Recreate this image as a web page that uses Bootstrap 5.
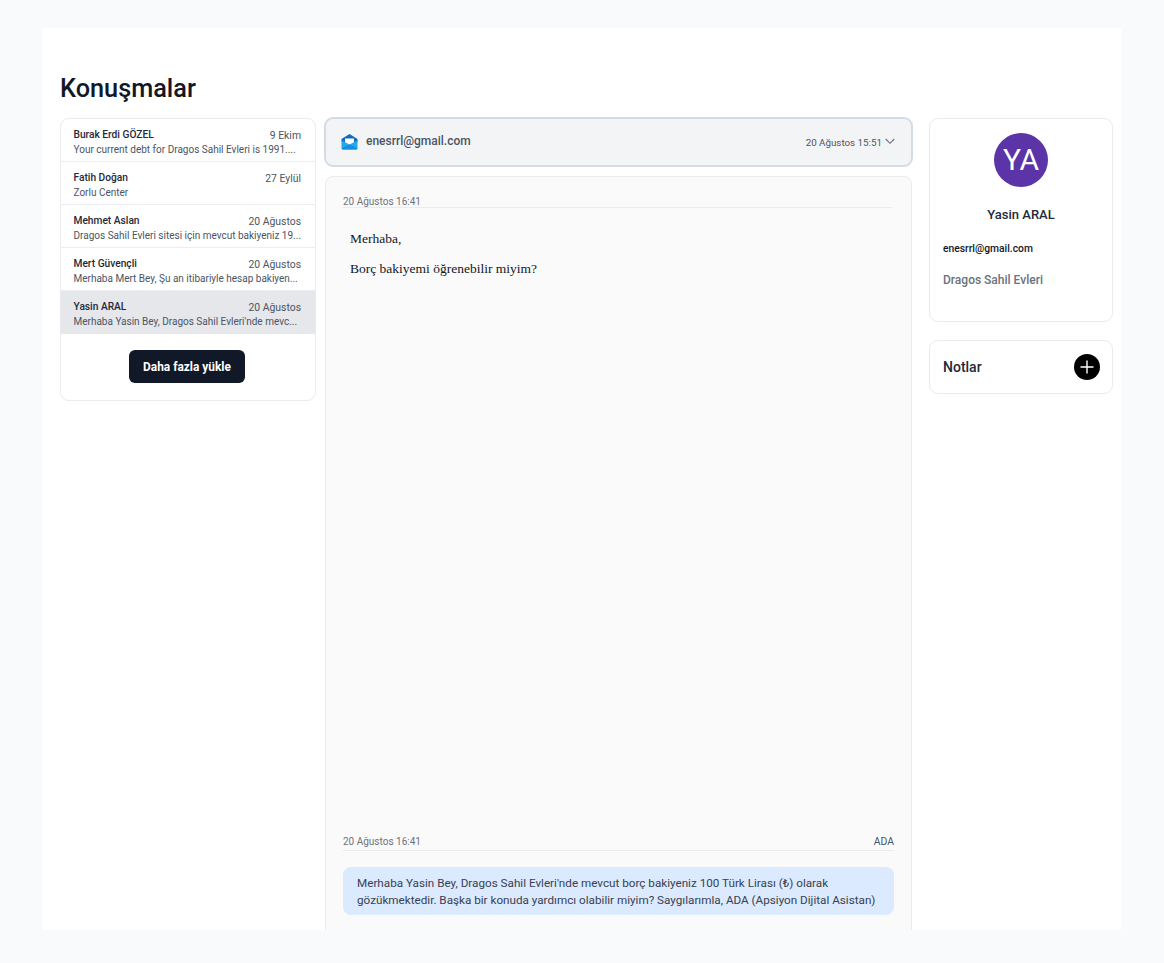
<!doctype html>
<html lang="tr">
<head>
<meta charset="utf-8">
<title>Konuşmalar</title>
<link href="https://cdn.jsdelivr.net/npm/bootstrap@5.3.0/dist/css/bootstrap.min.css" rel="stylesheet">
<style>
html,body{height:100%;overflow:hidden}
body{background:#f9fafb;font-family:Roboto,"Noto Sans",sans-serif;color:#111827;padding:28px 43px 33px 42px}
.sheet{background:#fff;height:902px;overflow:hidden;padding:43px 8px 0 18px}
.page-title{font-size:25.3px;font-weight:500;line-height:36px;margin:0 0 11px;color:#111827}
.cols{gap:9px;align-items:flex-start}
.col-left{width:256px;flex:none}
.col-mid{width:587px;flex:none}
.col-right{width:184px;flex:none;margin-left:8px}
.panel{background:#fff;border:1px solid #e9ebef;border-radius:9px}
.conv-list{border-radius:9px 9px 0 0;overflow:hidden}
.conv{padding:9px 14px 6px 12.5px;height:43px;border-bottom:1px solid #eceef1;font-size:10px;line-height:13px;color:#4b5563}
.conv:nth-child(5){background:#e5e7eb;border-bottom:0}
.conv-name{font-weight:500;font-size:10.2px;color:#1f2937}
.conv-date{font-size:10.4px;color:#4b5563;padding-top:1px}
.conv-text{white-space:nowrap;line-height:15px}
.more-btn{background:#111827;color:#fff;font-size:11.9px;font-weight:700;border-radius:6px;padding:2px 0 0;width:116px;height:33px;border:0;margin-left:-2px}
.more-btn:hover{background:#111827;color:#fff}
.more-wrap{padding:16px 0 17px}
.mail-head{background:#f3f4f6;border:2px solid #d3dce6;border-radius:9px;height:50px;padding:0 16px 0 15px;margin:-1px 0 9px -1px;width:589px}
.mail-addr{font-size:12px;color:#4b5563;font-weight:500;margin-left:8px;margin-top:-2px}
.mail-date{font-size:9.8px;color:#4b5563;margin-top:3px}
.thread{background:#fafafa;border:1px solid #e9ebef;border-radius:8px 8px 0 0;height:760px;padding:0 17px;display:flex;flex-direction:column}
.msg-meta{font-size:10px;color:#6b7280;border-bottom:1px solid #e9ebef}
.meta-top{margin:18px 2px 0 0;padding-top:1px;line-height:11px}
.meta-bottom{padding:1px 0 2px;line-height:12px}
.meta-bottom b{font-weight:400;font-size:10.4px;color:#4b5563}
.msg-body{font-family:"Liberation Serif",serif;font-size:13.5px;line-height:16px;color:#111827;padding:0 7px;margin-top:23px}
.msg-body p{margin:0 0 14px}
.bubble{background:#dbeafe;border-radius:8px;font-size:11.7px;line-height:17px;color:#374151;padding:8px 14px 0;margin-top:16px;height:48px;white-space:nowrap;flex:none}
.thread-end{height:20px;flex:none}
.avatar{width:54px;height:54px;border-radius:50%;background:#5b34a8;color:#fff;font-size:30px;line-height:54px;text-align:center;margin:0 auto}
.card-main{height:204px;padding:14px 13px 0}
.person{font-size:13px;font-weight:500;text-align:center;margin-top:19px;line-height:18px;color:#1f2937}
.person-mail{font-size:10.3px;font-weight:500;margin-top:18px;line-height:14px;color:#111827}
.person-site{font-size:12px;font-weight:500;margin-top:16px;line-height:16px;color:#6b7280}
.card-notes{height:54px;margin-top:18px;padding:0 12px 0 13px}
.notes-title{font-size:14px;font-weight:500;color:#1f2937}
.plus{width:26px;height:26px;display:block}
.chev{margin-left:3px}
</style>
</head>
<body>
<main class="sheet">
  <h1 class="page-title">Konuşmalar</h1>
  <div class="d-flex cols">
    <section class="col-left panel">
      <div class="conv-list">
        <div class="conv"><div class="d-flex justify-content-between"><span class="conv-name">Burak Erdi GÖZEL</span><span class="conv-date">9 Ekim</span></div><div class="conv-text">Your current debt for Dragos Sahil Evleri is 1991....</div></div>
        <div class="conv"><div class="d-flex justify-content-between"><span class="conv-name">Fatih Doğan</span><span class="conv-date">27 Eylül</span></div><div class="conv-text">Zorlu Center</div></div>
        <div class="conv"><div class="d-flex justify-content-between"><span class="conv-name">Mehmet Aslan</span><span class="conv-date">20 Ağustos</span></div><div class="conv-text">Dragos Sahil Evleri sitesi için mevcut bakiyeniz 19...</div></div>
        <div class="conv"><div class="d-flex justify-content-between"><span class="conv-name">Mert Güvençli</span><span class="conv-date">20 Ağustos</span></div><div class="conv-text">Merhaba Mert Bey, Şu an itibariyle hesap bakiyen...</div></div>
        <div class="conv"><div class="d-flex justify-content-between"><span class="conv-name">Yasin ARAL</span><span class="conv-date">20 Ağustos</span></div><div class="conv-text">Merhaba Yasin Bey, Dragos Sahil Evleri'nde mevc...</div></div>
      </div>
      <div class="more-wrap text-center"><button class="btn more-btn" type="button">Daha fazla yükle</button></div>
    </section>
    <section class="col-mid">
      <div class="mail-head d-flex align-items-center justify-content-between">
        <div class="d-flex align-items-center">
          <svg width="17" height="16" viewBox="0 0 17 16" aria-hidden="true"><path d="M8.5 0 16.5 5V8H.5V5Z" fill="#0f6cbd"/><path d="M4 4.5h9v6H4z" fill="#fff"/><path d="M.5 6.2 8.5 10.5 16.5 6.2V14a1.6 1.6 0 0 1-1.6 1.6H2.1A1.6 1.6 0 0 1 .5 14Z" fill="#28a8ea"/><path d="M.5 14.2 8.5 10.5 16.5 14.2V14a1.6 1.6 0 0 1-1.6 1.6H2.1A1.6 1.6 0 0 1 .5 14Z" fill="#1490df"/></svg>
          <span class="mail-addr">enesrrl@gmail.com</span>
        </div>
        <div class="d-flex align-items-center">
          <span class="mail-date">20 Ağustos 15:51</span>
          <svg class="chev" width="10" height="11" viewBox="0 0 10 11" aria-hidden="true"><path d="M.7 2l4.3 4.3L9.3 2" fill="none" stroke="#6b7280" stroke-width="1.1"/></svg>
        </div>
      </div>
      <div class="thread">
        <div class="msg-meta meta-top">20 Ağustos 16:41</div>
        <div class="msg-body flex-grow-1"><p>Merhaba,</p><p>Borç bakiyemi öğrenebilir miyim?</p></div>
        <div class="msg-meta meta-bottom d-flex justify-content-between"><span>20 Ağustos 16:41</span><b>ADA</b></div>
        <div class="bubble">Merhaba Yasin Bey, Dragos Sahil Evleri'nde mevcut borç bakiyeniz 100 Türk Lirası (₺) olarak<br>gözükmektedir. Başka bir konuda yardımcı olabilir miyim? Saygılarımla, ADA (Apsiyon Dijital Asistan)</div>
        <div class="thread-end"></div>
      </div>
    </section>
    <aside class="col-right">
      <div class="panel card-main">
        <div class="avatar">YA</div>
        <div class="person">Yasin ARAL</div>
        <div class="person-mail">enesrrl@gmail.com</div>
        <div class="person-site">Dragos Sahil Evleri</div>
      </div>
      <div class="panel card-notes d-flex align-items-center justify-content-between">
        <span class="notes-title">Notlar</span>
        <svg class="plus" viewBox="0 0 26 26" aria-hidden="true"><circle cx="13" cy="13" r="13" fill="#000"/><path d="M13 6.5v13M6.5 13h13" stroke="#fff" stroke-width="1.4"/></svg>
      </div>
    </aside>
  </div>
</main>
<script src="https://cdn.jsdelivr.net/npm/bootstrap@5.3.0/dist/js/bootstrap.bundle.min.js"></script>
</body>
</html>
